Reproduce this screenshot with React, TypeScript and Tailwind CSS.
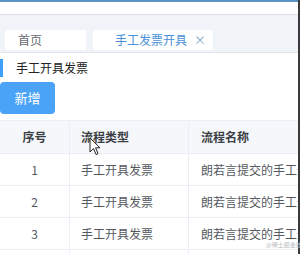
import React from "react";

const rows = [1, 2, 3, 4];

export default function App() {
  return (
    <div
      className="relative w-[300px] h-[254px] overflow-hidden bg-white flex"
      style={{ fontFamily: '"Noto Sans CJK SC", "Noto Sans", sans-serif' }}
    >
      <div className="w-[298px] h-full flex flex-col overflow-hidden">
        <div className="h-[2px] bg-[#5b93c7] shrink-0" />
        <div className="h-[12px] bg-white border-b border-[#dcdfe6] box-content shrink-0" />
        <div className="h-[35px] bg-[#f0f3f7] border-b border-[#dfe3ea] box-content shrink-0 flex items-end pb-[2px] pl-[5px] gap-[7px]">
          <div className="w-[81px] h-[20px] bg-white rounded-[2px] flex items-center pl-[13px] text-[12px] text-[#666a70]">
            首页
          </div>
          <div className="w-[120px] h-[20px] bg-white rounded-[2px] flex items-center pl-[22px] text-[12px] text-[#4a90d9]">
            手工发票开具
            <span className="ml-[7px] text-[#7fa6cf] text-[12px] leading-none">×</span>
          </div>
        </div>
        <div className="mt-[6px] h-[18px] flex items-center shrink-0">
          <div className="w-[3px] h-[18px] bg-[#409eff]" />
          <div className="ml-[13px] text-[12px] text-[#222] leading-none">手工开具发票</div>
        </div>
        <div className="mt-[5px] w-[55px] h-[32px] rounded-[4px] bg-[#4ba3f7] text-white text-[13px] flex items-center justify-center shrink-0">
          新增
        </div>
        <div className="mt-[6px] border-t border-[#ebeef5] shrink-0">
          <div className="grid grid-cols-[70px_119px_200px] h-[33px] bg-[#f5f7fa] border-b border-[#ebeef5] text-[12px] font-bold text-[#3b3f45]">
            <div className="flex items-center justify-center border-r border-[#ebeef5]">序号</div>
            <div className="flex items-center pl-[11px] border-r border-[#ebeef5]">流程类型</div>
            <div className="flex items-center pl-[12px] whitespace-nowrap">流程名称</div>
          </div>
          {rows.map((n) => (
            <div
              key={n}
              className="grid grid-cols-[70px_119px_200px] h-[32px] border-b border-[#ebeef5] text-[12px] text-[#55595f]"
            >
              <div className="flex items-center justify-center border-r border-[#ebeef5]">{n <= 3 ? n : ""}</div>
              <div className="flex items-center pl-[11px] border-r border-[#ebeef5] whitespace-nowrap">
                {n <= 3 ? "手工开具发票" : ""}
              </div>
              <div className="flex items-center pl-[12px] whitespace-nowrap">
                {n <= 3 ? "朗若言提交的手工开具发票" : ""}
              </div>
            </div>
          ))}
        </div>
      </div>
      <div className="w-[2px] h-full bg-[#3a3a3a]" />
      <svg className="absolute left-[89px] top-[137px]" width="12" height="19" viewBox="0 0 12 19">
        <path d="M1 1 L1 15 L4.5 11.5 L7 17.5 L9 16.6 L6.6 10.8 L11 10.8 Z" fill="white" stroke="#222" strokeWidth="1" strokeLinejoin="round" />
      </svg>
      <div className="absolute left-[266px] top-[242px] text-[6px] text-[#b8bcc2] whitespace-nowrap leading-none">
        @稀土掘金技术社区
      </div>
    </div>
  );
}
